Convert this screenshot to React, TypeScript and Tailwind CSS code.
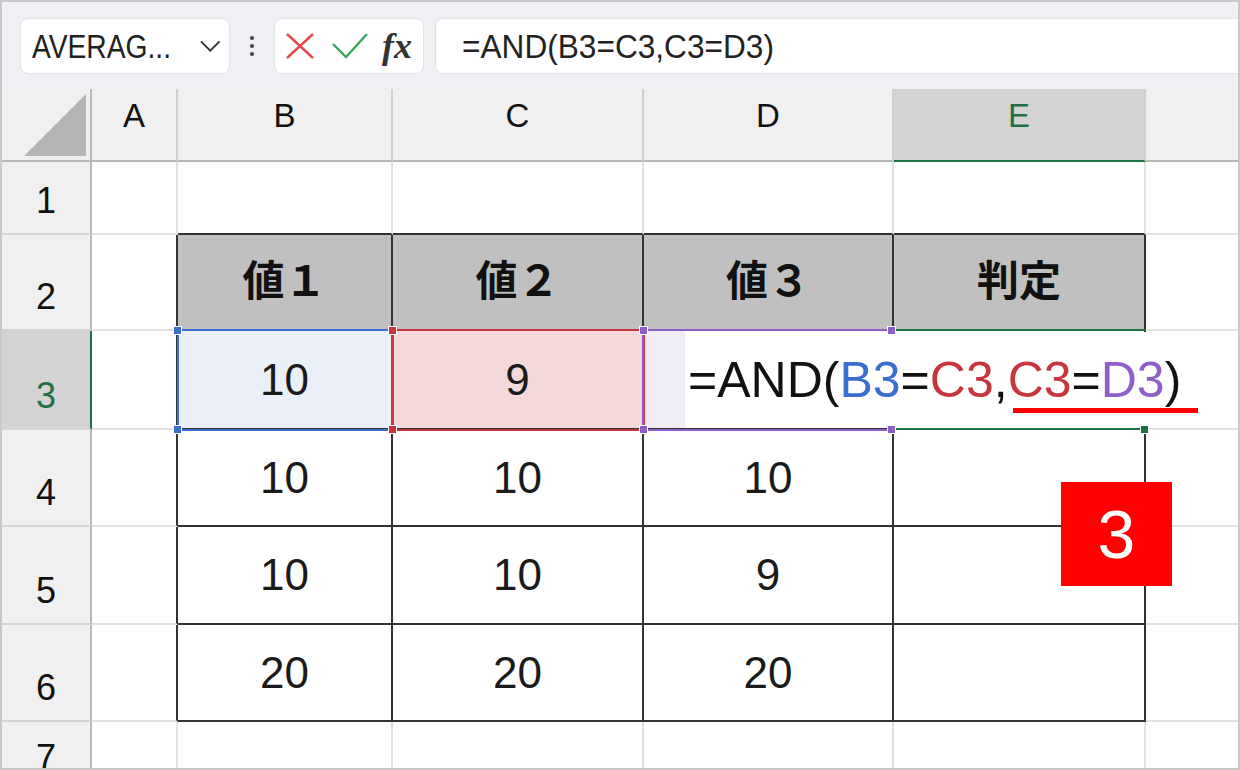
import React from "react";

// table body, row 2..6, columns B..E
const body: string[][] = [
  ["値１", "値２", "値３", "判定"],
  ["10", "9", "", ""],
  ["10", "10", "10", ""],
  ["10", "10", "9", ""],
  ["20", "20", "20", ""],
];

function Handle({ pos, color }: { pos: string; color: string }) {
  return <div className={`absolute z-30 w-[9px] h-[9px] border border-white ${pos} ${color}`} />;
}

function Toolbar() {
  return (
    <div className="h-[87px] shrink-0 bg-[#eef0f3] flex items-center pl-[18px]">
      <div className="w-[210px] h-[56px] bg-white rounded-[8px] border border-[#e1e3e7] flex items-center justify-between pl-[11px] pr-[9px]">
        <span className="text-[34px] leading-none scale-x-[0.83] origin-left whitespace-nowrap text-[#222]">
          AVERAG...
        </span>
        <svg width="22" height="12" viewBox="0 0 22 12">
          <polyline points="1,1 11,11 21,1" fill="none" stroke="#333" strokeWidth="2" />
        </svg>
      </div>
      <div className="w-[44px] flex flex-col items-center gap-[4px]">
        <div className="w-[4px] h-[4px] rounded-full bg-[#444]" />
        <div className="w-[4px] h-[4px] rounded-full bg-[#444]" />
        <div className="w-[4px] h-[4px] rounded-full bg-[#444]" />
      </div>
      <div className="w-[150px] h-[56px] bg-white rounded-[8px] border border-[#e1e3e7] flex items-center pl-[11px]">
        <svg width="28" height="26" viewBox="0 0 28 26">
          <path d="M1 1 L27 25 M27 1 L1 25" fill="none" stroke="#e5484d" strokeWidth="2.4" />
        </svg>
        <svg width="36" height="26" viewBox="0 0 36 26" className="ml-[18px]">
          <polyline points="1,11 14,24 35,1" fill="none" stroke="#3ba55c" strokeWidth="2.4" />
        </svg>
        <span className="ml-[14px] text-[36px] leading-none italic font-bold font-['Liberation_Serif',serif] text-[#333]">
          fx
        </span>
      </div>
      <div className="ml-[11px] flex-1 h-[56px] bg-white rounded-l-[8px] border border-r-0 border-[#e1e3e7] flex items-center pl-[26px]">
        <span className="text-[34px] leading-none scale-x-[0.93] origin-left whitespace-nowrap text-[#222]">
          =AND(B3=C3,C3=D3)
        </span>
      </div>
    </div>
  );
}

function cellClass(r: number, c: number) {
  // r: 1..7, c: 1..6 (A..F)
  const inTable = r >= 2 && r <= 6;
  let right = "border-r-2 border-r-[#e2e2e2]";
  if (c === 6) right = "border-r-0";
  else if (inTable && c >= 1 && c <= 5) right = "border-r-2 border-r-[#333]";
  let bottom = "border-b-2 border-b-[#e2e2e2]";
  if (r === 7) bottom = "border-b-0";
  else if (r >= 1 && r <= 6 && c >= 2 && c <= 5) bottom = "border-b-2 border-b-[#333]";
  let bg = "bg-white";
  if (r === 2 && c >= 2 && c <= 5) bg = "bg-[#c0c0c0] pb-[8px]";
  if (r === 3 && c === 2) bg = "bg-[#ebeff8]";
  if (r === 3 && c === 3) bg = "bg-[#f5d8da]";
  return `relative flex items-center justify-center ${right} ${bottom} ${bg}`;
}

function Sheet() {
  const letters = ["A", "B", "C", "D", "E", ""];
  return (
    <div className="relative flex-1 grid grid-cols-[90px_86px_215px_251px_250px_252px_1fr] grid-rows-[73px_73px_96px_99px_97px_98px_97px_1fr] overflow-hidden">
      {/* corner */}
      <div className="bg-[#f0f0f0] border-r-2 border-r-[#b8b8b8] border-b-2 border-b-[#b8b8b8] relative">
        <svg width="64" height="64" viewBox="0 0 64 64" className="absolute left-[22px] top-[5px]">
          <polygon points="62,0 62,62 0,62" fill="#b5b5b5" />
        </svg>
      </div>
      {letters.map((l, i) => (
        <div
          key={"h" + i}
          className={
            i === 4
              ? "bg-[#d3d3d3] border-r-2 border-r-[#d0d0d0] border-b-2 border-b-[#1e7145] flex justify-center items-start pt-[10px] text-[33px] leading-none text-[#1e7145]"
              : i === 5
              ? "bg-[#f0f0f0] border-b-2 border-b-[#b8b8b8]"
              : "bg-[#f0f0f0] border-r-2 border-r-[#d0d0d0] border-b-2 border-b-[#b8b8b8] flex justify-center items-start pt-[10px] text-[33px] leading-none"
          }
        >
          {l}
        </div>
      ))}
      {[1, 2, 3, 4, 5, 6, 7].map((r) => (
        <React.Fragment key={"r" + r}>
          <div
            className={
              r === 3
                ? "bg-[#d3d3d3] border-r-2 border-r-[#1e7145] border-b-2 border-b-[#d4d4d4] flex justify-center items-end pb-[14px] text-[36px] leading-none text-[#1e7145]"
                : r === 7
                ? "bg-[#f0f0f0] border-r-2 border-r-[#b8b8b8] flex justify-center items-start pt-[18px] text-[36px] leading-none overflow-hidden"
                : "bg-[#f0f0f0] border-r-2 border-r-[#b8b8b8] border-b-2 border-b-[#d4d4d4] flex justify-center items-end pb-[14px] text-[36px] leading-none"
            }
          >
            {r}
          </div>
          {[1, 2, 3, 4, 5, 6].map((c) => {
            const txt = r >= 2 && r <= 6 && c >= 2 && c <= 5 ? body[r - 2][c - 2] : "";
            const isHead = r === 2;
            return (
              <div key={r + "-" + c} className={cellClass(r, c)}>
                {txt && (
                  <span
                    className={
                      isHead
                        ? "text-[42px] leading-none font-bold font-['Noto_Sans_CJK_JP',sans-serif] text-[#111]"
                        : "text-[44px] leading-none text-[#1a1a1a]"
                    }
                  >
                    {txt}
                  </span>
                )}
                {r === 3 && c === 2 && (
                  <>
                    <div className="absolute z-10 left-[-1px] top-[-2px] right-[-3px] bottom-[-3px] border-2 border-[#3a6fd0]" />
                    <Handle pos="left-[-5px] top-[-5px]" color="bg-[#3a6fd0]" />
                    <Handle pos="left-[-5px] top-[94px]" color="bg-[#3a6fd0]" />
                  </>
                )}
                {r === 3 && c === 3 && (
                  <>
                    <div className="absolute z-10 left-[-2px] top-[-2px] right-[-3px] bottom-[-3px] border-2 border-[#c9353f]" />
                    <Handle pos="left-[-5px] top-[-5px]" color="bg-[#c9353f]" />
                    <Handle pos="left-[-5px] top-[94px]" color="bg-[#c9353f]" />
                  </>
                )}
                {r === 3 && c === 4 && (
                  <>
                    <div className="absolute left-0 top-0 bottom-0 w-[41px] bg-[#f0edf8]" />
                    <div className="absolute z-10 left-[-2px] top-[-2px] right-[-3px] bottom-[-3px] border-2 border-[#8f5fc9]" />
                    <div className="absolute z-20 left-[41px] top-[1px] w-[522px] h-[95px] bg-white flex items-center pl-[3px]">
                      <span className="text-[50px] leading-none whitespace-nowrap text-[#111]">
                        =AND(<span className="text-[#3a6fd0]">B3</span>=<span className="text-[#c9353f]">C3</span>,
                        <span className="text-[#c9353f]">C3</span>=<span className="text-[#8f5fc9]">D3</span>)
                      </span>
                      <div className="absolute left-[328px] top-[76px] w-[185px] h-[5px] bg-[#ff0000]" />
                    </div>
                    <Handle pos="left-[-5px] top-[-5px]" color="bg-[#8f5fc9]" />
                    <Handle pos="left-[-5px] top-[94px]" color="bg-[#8f5fc9]" />
                    <Handle pos="left-[243px] top-[-5px]" color="bg-[#8f5fc9]" />
                    <Handle pos="left-[243px] top-[94px]" color="bg-[#8f5fc9]" />
                  </>
                )}
                {r === 3 && c === 5 && (
                  <>
                    <div className="absolute z-10 left-[2px] top-[-2px] w-[250px] h-[2px] bg-[#1e7145]" />
                    <div className="absolute z-10 left-[2px] top-[97px] w-[246px] h-[2px] bg-[#1e7145]" />
                    <Handle pos="left-[246px] top-[94px]" color="bg-[#1e7145]" />
                  </>
                )}
              </div>
            );
          })}
        </React.Fragment>
      ))}
      <div className="absolute z-40 left-[1059px] top-[393px] w-[111px] h-[104px] bg-[#ff0000] flex items-center justify-center">
        <span className="text-[68px] leading-none text-white">3</span>
      </div>
    </div>
  );
}

export default function App() {
  return (
    <div className="w-[1240px] h-[770px] border-2 border-[#c9c9c9] bg-white overflow-hidden flex flex-col font-['Liberation_Sans',sans-serif] text-[#111]">
      <Toolbar />
      <Sheet />
    </div>
  );
}
